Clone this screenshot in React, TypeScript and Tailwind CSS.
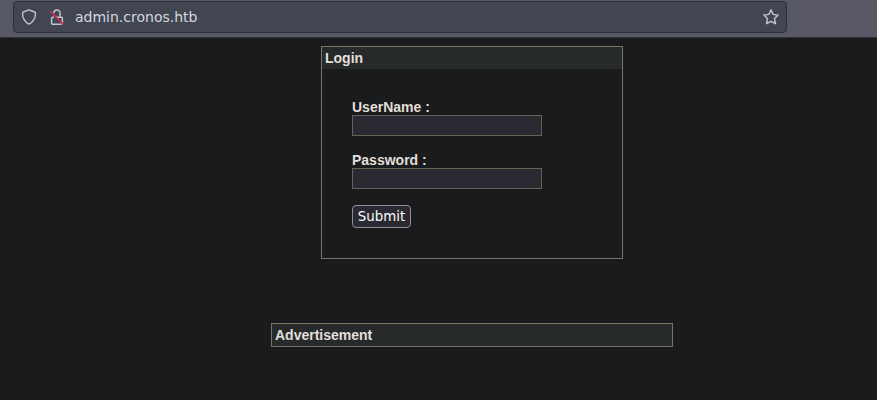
import React from 'react';

function AddressBar() {
  return (
    <header className="h-[38px] border-b border-[#30303c] bg-[#595966] pl-[13px] pt-px">
      <div className="flex h-8 w-[774px] items-center rounded-[4px] border border-[#2d2f3c] bg-[#414651] pl-[7px] pr-[7px]">
        <svg className="size-4 shrink-0" viewBox="0 0 16 16" fill="none" stroke="#bfc4d0" strokeWidth="1.4" strokeLinejoin="round">
          <path d="M8 .9 13.6 3q.9.3.9 1.3C14.5 9 12.3 12.900 8 15.200 3.700 12.900 1.500 9 1.500 4.300q0-1 .9-1.300Z" />
        </svg>
        <svg className="ml-3 size-4 shrink-0" viewBox="0 0 16 16" fill="none" stroke="#bfc4d0" strokeWidth="1.5" strokeLinejoin="round">
          <path d="M4.900 4.300a3.100 3.400 0 0 1 6.200 0v3.600M6.900 8.300H12.600q.8 0 .8.8v4.600M12.800 15.200H3.500q-.9 0-.9-.9V9.100q0-.8.8-.8H5" />
          <path d="M1.200 2.200 14.600 15.600" stroke="#e22850" strokeWidth="1.4" />
        </svg>
        <span className="ml-[10px] grow font-['DejaVu_Sans',sans-serif] text-[14px] leading-[18px] text-[#d3d7e0]">admin.cronos.htb</span>
        <svg className="size-4 shrink-0" viewBox="0 0 16 16" fill="none" stroke="#c3c7d2" strokeWidth="1.4" strokeLinejoin="round">
          <path d="m8 .9 2.1 4.500 5.100.7-3.700 3.500 1 5.100L8 12.300l-4.500 2.400 1-5.100L.8 6.100l5.100-.7Z" />
        </svg>
      </div>
    </header>
  );
}

function Field({ label, type }: { label: string; type: string }) {
  return (
    <label className="mb-4 block">
      <span className="block h-4 text-[14px] leading-4 font-bold">{label}</span>
      <input type={type} className="block h-[21px] w-[190px] border border-[#696156] bg-[#2b2a33] px-1 outline-none" />
    </label>
  );
}

export default function App() {
  return (
    <div className="flex h-[400px] flex-col overflow-hidden bg-[#1a1b1c] font-['Liberation_Sans',Arial,sans-serif] text-[14px] text-[#e2dfda]">
      <AddressBar />
      <main className="flex flex-col pt-2">
        <section className="ml-[321px] h-[213px] w-[302px] border border-[#7e7265]">
          <h1 className="h-[22px] bg-[#262a2a] pl-[3px] leading-[22px] font-bold">Login</h1>
          <form className="px-[30px] pt-[30px]" onSubmit={(e) => e.preventDefault()}>
            <Field label="UserName :" type="text" />
            <Field label="Password :" type="password" />
            <button className="flex h-[23px] w-[59px] items-center justify-center rounded-[4px] border border-[#8f8f9d] bg-[#2b2a33] font-['DejaVu_Sans',sans-serif] text-[13.333px] leading-4 text-[#fbfbfe]">Submit</button>
          </form>
        </section>
        <section className="mt-16 ml-[271px] h-6 w-[402px] border border-[#7e7265] bg-[#262a2a] pl-[3px] leading-[22px] font-bold">Advertisement</section>
      </main>
    </div>
  );
}
